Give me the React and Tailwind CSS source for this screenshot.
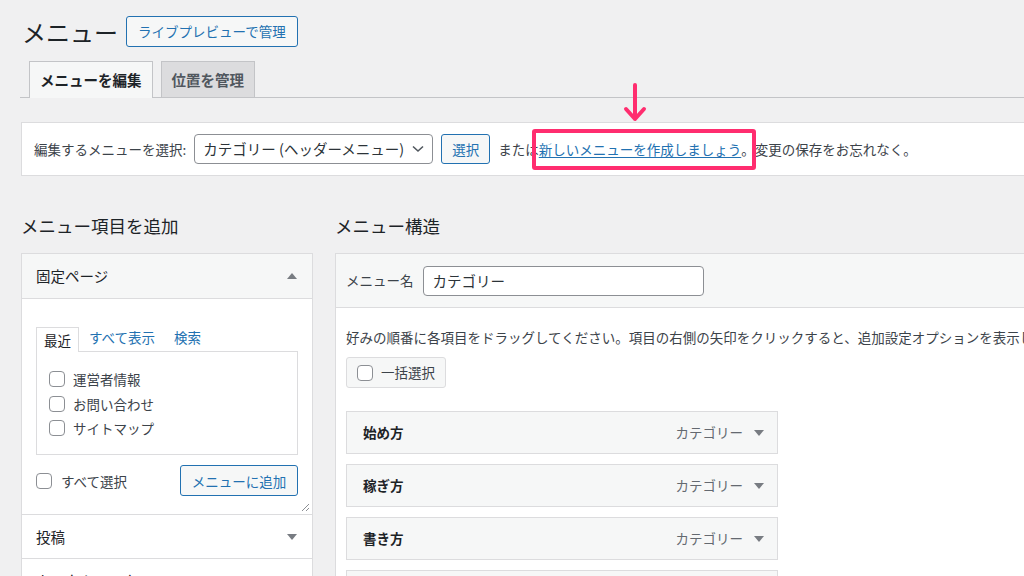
import React from 'react'

const pages = ['運営者情報', 'お問い合わせ', 'サイトマップ']
const items = ['始め方', '稼ぎ方', '書き方', 'まとめ']

function Box({ className = '' }) {
  return <span className={'inline-block w-4 h-4 shrink-0 rounded-[4px] border border-[#8c8f94] bg-white ' + className}></span>
}

function Tri({ up }) {
  return (
    <svg width="10" height="6" viewBox="0 0 10 6" className="shrink-0">
      {up ? <path d="M0 6 L5 0 L10 6 Z" fill="#787c82" /> : <path d="M0 0 L10 0 L5 6 Z" fill="#787c82" />}
    </svg>
  )
}

export default function App() {
  return (
    <div className="w-[1024px] h-[576px] overflow-hidden bg-[#f0f0f1] text-[13.5px] text-[#3c434a] font-['Noto_Sans_CJK_JP','Noto_Sans',sans-serif]">
      <div className="w-[1100px] pl-5 pt-4">
        {/* header */}
        <div className="flex items-center gap-[8px] h-[31px]">
          <h1 className="text-[24px] leading-none text-[#1d2327] pl-[2px]">メニュー</h1>
          <button className="h-[31px] px-[11px] rounded-[3px] border border-[#2271b1] bg-[#f6f7f7] text-[#2271b1] text-[13.5px]">ライブプレビューで管理</button>
        </div>

        {/* tabs */}
        <div className="mt-[14px] flex items-end gap-2 pl-[9px] border-b border-[#c3c4c7] h-[37px]">
          <div className="h-[37px] px-[10px] flex items-center border border-[#c3c4c7] border-b-0 bg-[#f6f7f7] text-[14.5px] font-semibold text-[#1d2327] -mb-px">メニューを編集</div>
          <div className="h-[36px] px-[10px] flex items-center border border-[#c3c4c7] border-b-0 bg-[#dcdcde] text-[14.5px] font-semibold text-[#50575e]">位置を管理</div>
        </div>

        {/* manage menus */}
        <div className="mt-[24px] ml-px h-[54px] bg-white border border-[#dcdcde] flex items-center pl-3 gap-2">
          <span>編集するメニューを選択:</span>
          <div className="w-[239px] h-[30px] border border-[#8c8f94] rounded-[4px] flex items-center justify-between pl-2 pr-2 text-[14.5px] text-[#2c3338]">
            <span>カテゴリー (ヘッダーメニュー)</span>
            <svg width="12" height="8" viewBox="0 0 12 8"><path d="M1 1.5 L6 6 L11 1.5" stroke="#50575e" strokeWidth="1.6" fill="none" /></svg>
          </div>
          <button className="h-[30px] w-[49px] rounded-[3px] border border-[#2271b1] bg-[#f6f7f7] text-[#2271b1]">選択</button>
          <span className="whitespace-nowrap">
            または
            <span className="relative">
              <a className="text-[#2271b1] underline underline-offset-2">新しいメニューを作成しましょう</a>
              <span className="absolute -left-[7px] -right-[15px] -top-[10px] -bottom-[11px] border-4 border-[#ff2d6f] rounded-[3px]"></span>
              <svg className="absolute left-[84px] -top-[56px]" width="24" height="40" viewBox="0 0 24 40">
                <path d="M12 2 L12 36 M3 26 L12 36 L21 26" stroke="#ff2d6f" strokeWidth="4" fill="none" strokeLinecap="round" strokeLinejoin="round" />
              </svg>
            </span>
            。変更の保存をお忘れなく。
          </span>
        </div>

        {/* columns */}
        <div className="mt-[38px] flex gap-[22px] pl-px">
          {/* left */}
          <div className="w-[292px] shrink-0">
            <h2 className="text-[17.5px] text-[#1d2327] leading-[24px]">メニュー項目を追加</h2>
            <div className="mt-[15px] bg-white border border-[#dcdcde]">
              <div className="h-[45px] bg-[#f6f7f7] border-b border-[#dcdcde] flex items-center justify-between pl-[14px] pr-[15px] text-[14.5px] text-[#1d2327]">
                <span>固定ページ</span>
                <Tri up />
              </div>
              <div className="relative px-[14px] pt-[28px] pb-[18px]">
                <div className="flex items-end">
                  <span className="px-[7px] h-[25px] flex items-center border border-[#dcdcde] border-b-0 bg-white text-[#1d2327] -mb-px relative">最近</span>
                  <span className="ml-[10px] pb-[4px] text-[#2271b1]">すべて表示</span>
                  <span className="ml-[19px] pb-[4px] text-[#2271b1]">検索</span>
                </div>
                <div className="h-[104px] border border-[#dcdcde] pt-[19px] pl-[12px] flex flex-col gap-[8.5px]">
                  {pages.map((p) => (
                    <label key={p} className="flex items-center gap-[8px] leading-[16px]">
                      <Box />
                      <span>{p}</span>
                    </label>
                  ))}
                </div>
                <div className="mt-[10px] flex items-center justify-between">
                  <label className="flex items-center gap-[9px]">
                    <Box />
                    <span>すべて選択</span>
                  </label>
                  <button className="h-[31px] w-[118px] rounded-[3px] border border-[#2271b1] bg-[#f6f7f7] text-[#2271b1]">メニューに追加</button>
                </div>
                <svg className="absolute right-[2px] bottom-[2px]" width="9" height="9" viewBox="0 0 9 9">
                  <path d="M8 1 L1 8 M8 5 L5 8" stroke="#8c8f94" strokeWidth="1" />
                </svg>
              </div>
              <div className="h-[44px] border-t border-[#dcdcde] flex items-center justify-between pl-[14px] pr-[15px] text-[14.5px] text-[#1d2327]">
                <span>投稿</span>
                <Tri />
              </div>
              <div className="h-[44px] border-t border-[#dcdcde] flex items-center justify-between pl-[14px] pr-[15px] text-[14.5px] text-[#1d2327]">
                <span>カスタムリンク</span>
                <Tri />
              </div>
            </div>
          </div>

          {/* right */}
          <div className="w-[760px] shrink-0">
            <h2 className="text-[17.5px] text-[#1d2327] leading-[24px]">メニュー構造</h2>
            <div className="mt-[15px] bg-white border border-[#dcdcde]">
              <div className="h-[54px] bg-[#f6f7f7] border-b border-[#dcdcde] flex items-center pl-[10px] gap-[9px]">
                <span>メニュー名</span>
                <div className="w-[281px] h-[30px] bg-white border border-[#8c8f94] rounded-[4px] flex items-center pl-[9px] text-[14.5px] text-[#2c3338]">カテゴリー</div>
              </div>
              <div className="pl-[10px] pt-[19px] pb-6">
                <p className="whitespace-nowrap leading-[20px]">好みの順番に各項目をドラッグしてください。項目の右側の矢印をクリックすると、追加設定オプションを表示します。</p>
                <div className="mt-[10px] inline-flex items-center gap-[8px] h-[31px] px-[10px] bg-[#f6f7f7] border border-[#dcdcde] rounded-[3px]">
                  <Box />
                  <span>一括選択</span>
                </div>
                <div className="mt-[23px] flex flex-col gap-[10px]">
                  {items.map((it) => (
                    <div key={it} className="w-[432px] h-[43px] bg-[#f6f7f7] border border-[#dcdcde] flex items-center justify-between pl-[16px] pr-[13px]">
                      <span className="font-semibold text-[#1d2327]">{it}</span>
                      <span className="flex items-center gap-[11px] text-[#646970]">
                        カテゴリー
                        <Tri />
                      </span>
                    </div>
                  ))}
                </div>
              </div>
            </div>
          </div>
        </div>
      </div>
    </div>
  )
}
